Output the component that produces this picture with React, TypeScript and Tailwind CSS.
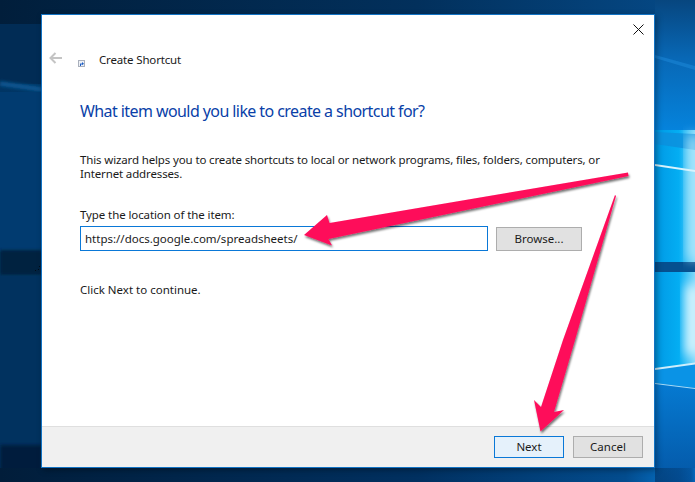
function Wallpaper() {
  return (
    <svg className="absolute inset-0" width="695" height="482" viewBox="0 0 695 482">
      <defs>
        <linearGradient id="base" x1="0" y1="0" x2="1" y2="0">
          <stop offset="0" stopColor="#003564" />
          <stop offset="0.9" stopColor="#014a8c" />
          <stop offset="1" stopColor="#0560ac" />
        </linearGradient>
        <linearGradient id="rightTop" x1="0" y1="0" x2="0" y2="1">
          <stop offset="0" stopColor="#07467f" />
          <stop offset="0.45" stopColor="#0868b6" />
          <stop offset="1" stopColor="#0583dc" />
        </linearGradient>
        <linearGradient id="rightBottom" x1="0" y1="0" x2="0" y2="1">
          <stop offset="0" stopColor="#0681da" />
          <stop offset="1" stopColor="#0457a6" />
        </linearGradient>
        <linearGradient id="pane" x1="0" y1="0" x2="1" y2="0">
          <stop offset="0" stopColor="#0098e4" />
          <stop offset="0.6" stopColor="#04aef3" />
          <stop offset="1" stopColor="#7fd8fa" />
        </linearGradient>
        <linearGradient id="bottom" x1="0" y1="0" x2="1" y2="0">
          <stop offset="0" stopColor="#011d3a" />
          <stop offset="0.6" stopColor="#013060" />
          <stop offset="0.9" stopColor="#034c8e" />
          <stop offset="1" stopColor="#0680dc" />
        </linearGradient>
        <linearGradient id="top" x1="0" y1="0" x2="1" y2="0">
          <stop offset="0" stopColor="#011e3b" />
          <stop offset="0.6" stopColor="#02305c" />
          <stop offset="1" stopColor="#054a88" />
        </linearGradient>
        <filter id="soft" x="-20%" y="-50%" width="140%" height="200%">
          <feGaussianBlur stdDeviation="1.5" />
        </filter>
        <filter id="softer" x="-50%" y="-50%" width="200%" height="200%">
          <feGaussianBlur stdDeviation="6" />
        </filter>
      </defs>
      <rect width="695" height="482" fill="url(#base)" />
      <rect width="695" height="24" fill="url(#top)" />
      <rect y="24" width="42" height="60" fill="#012c55" />
      <path d="M0 81 L42 87 L42 92 L0 86 Z" fill="#08558f" filter="url(#soft)" />
      <rect y="92" width="42" height="160" fill="#013b70" />
      <rect y="250" width="42" height="25" fill="#01213f" filter="url(#soft)" />
      <rect y="276" width="42" height="170" fill="#01325f" />
      <rect y="445" width="42" height="37" fill="#011f3e" filter="url(#soft)" />
      <rect y="468" width="695" height="14" fill="url(#bottom)" />
      <path d="M35 270 h1 v1 h-1 Z M38 269 h1 v1 h-1 Z M39 266 h1 v1 h-1 Z" fill="#000c18" />

      {/* right side, window logo light */}
      <rect x="655" y="0" width="40" height="130" fill="url(#rightTop)" />
      <path d="M655 55 L695 66 L695 70 L655 58 Z" fill="#1a86d6" opacity="0.6" />
      <rect x="655" y="130" width="40" height="132" fill="url(#pane)" />
      <path d="M655 132 L695 134 L695 150 L655 144 Z" fill="#0d8fdc" opacity="0.8" />
      <rect x="655" y="262" width="40" height="10" fill="#05508f" />
      <rect x="655" y="272" width="40" height="96" fill="url(#pane)" />
      <rect x="688" y="135" width="10" height="125" fill="#b6ebfc" filter="url(#softer)" />
      <rect x="686" y="285" width="12" height="70" fill="#e8fbff" filter="url(#softer)" />
      <path d="M655 164 L695 170 L695 172 L655 166 Z" fill="#d8f3fd" />
      <path d="M655 369 L695 364 L695 482 L655 482 Z" fill="url(#rightBottom)" />
      <path d="M655 369 L695 364 L695 388 L655 383 Z" fill="#0a93e6" />
      <path d="M655 368 L695 362.5 L695 364.5 L655 370 Z" fill="#cdeefc" />
      <path d="M655 383 L695 388 L695 389 L655 384 Z" fill="#a7dcf8" />
      <rect x="655" y="468" width="40" height="14" fill="url(#bottom)" opacity="0.35" />
    </svg>
  );
}

function Arrows() {
  const shapes = [
    "M628 172.5 L329.5 223 L327 215 L304 235 L332 245.5 L328.5 239 L628.5 176 Z",
    "M615 195 L563 340 L541 407 L534 400 L540.5 431.5 L564 410 L554 412 L575 340 L616 196 Z",
  ];
  return (
    <svg className="absolute inset-0" width="695" height="482" viewBox="0 0 695 482">
      <defs>
        <filter id="arrowShadow" x="-10%" y="-10%" width="120%" height="120%">
          <feDropShadow dx="1" dy="2" stdDeviation="1.2" floodColor="#000" floodOpacity="0.55" />
        </filter>
      </defs>
      {shapes.map((d) => (
        <path key={d} d={d} fill="#fe0b5a" filter="url(#arrowShadow)" />
      ))}
    </svg>
  );
}

export default function App() {
  return (
    <div
      className="relative h-[482px] w-[695px] overflow-hidden pl-[41px] pt-[14px] text-[11.5px] text-[#1a1a1a]"
      style={{ fontFamily: '"Noto Sans", "Liberation Sans", sans-serif' }}
    >
      <Wallpaper />

      {/* Wizard window */}
      <div className="relative flex h-[454px] w-[614px] flex-col border border-[#1273c4] bg-white shadow-[2px_2px_6px_rgba(0,0,0,0.35)]">
        <div className="flex h-[24px] justify-end pr-[10px] pt-[9px]">
          <svg width="11" height="11" viewBox="0 0 11 11">
            <path d="M0.5 0.5 L10.5 10.5 M10.5 0.5 L0.5 10.5" stroke="#111" strokeWidth="1" fill="none" />
          </svg>
        </div>

        <div className="mt-[10px] flex h-[21px] items-center">
          <svg className="ml-[7px] mt-[-3px]" width="13" height="12" viewBox="0 0 13 12">
            <path d="M13 6 H1.5 M6.5 1 L1.5 6 L6.5 11" stroke="#c4c4c4" strokeWidth="2" fill="none" />
          </svg>
          <svg className="ml-[16px] mt-[7px]" width="7" height="7" viewBox="0 0 7 7">
            <rect x="0.5" y="0.5" width="6" height="6" fill="#eef1f6" stroke="#aab0bc" />
            <path d="M2 6 V3.5 H4 V2 L6 3.8 L4 5.2 V4.4 H3 V6 Z" fill="#1f5fc4" />
          </svg>
          <span className="ml-[14px] tracking-[-0.16px]">Create Shortcut</span>
        </div>

        <div className="flex flex-1 flex-col pl-[38px] pr-[40px]">
          <h1 className="mt-[30px] h-[22px] text-[16px] font-normal leading-[22px] tracking-[-0.58px] text-[#0a3fa8]">
            What item would you like to create a shortcut for?
          </h1>
          <p className="mt-[31px] whitespace-nowrap leading-[14px] tracking-[-0.14px]">
            This wizard helps you to create shortcuts to local or network programs, files, folders, computers, or
            <br />
            Internet addresses.
          </p>
          <label className="mt-[26px] h-[16px] leading-[16px] tracking-[-0.1px]">
            Type the location of the item:
          </label>
          <div className="mt-[3px] flex items-center gap-[8px]">
            <div className="flex h-[25px] w-[408px] items-center border border-[#0a78d7] pl-[4px]">
              https://docs.google.com/spreadsheets/
            </div>
            <button className="h-[24px] w-[86px] border border-[#adadad] bg-[#e1e1e1]">Browse...</button>
          </div>
          <p className="mt-[31px] leading-[16px]">Click Next to continue.</p>
        </div>

        <div className="flex h-[41px] items-start justify-end gap-[9px] border-t border-[#dfdfdf] bg-[#f0f0f0] pr-[11px] pt-[9px]">
          <button className="h-[22px] w-[70px] border border-[#0a78d7] bg-[#e5f1fb]">Next</button>
          <button className="h-[22px] w-[70px] border border-[#adadad] bg-[#e1e1e1]">Cancel</button>
        </div>
      </div>

      <Arrows />
    </div>
  );
}
